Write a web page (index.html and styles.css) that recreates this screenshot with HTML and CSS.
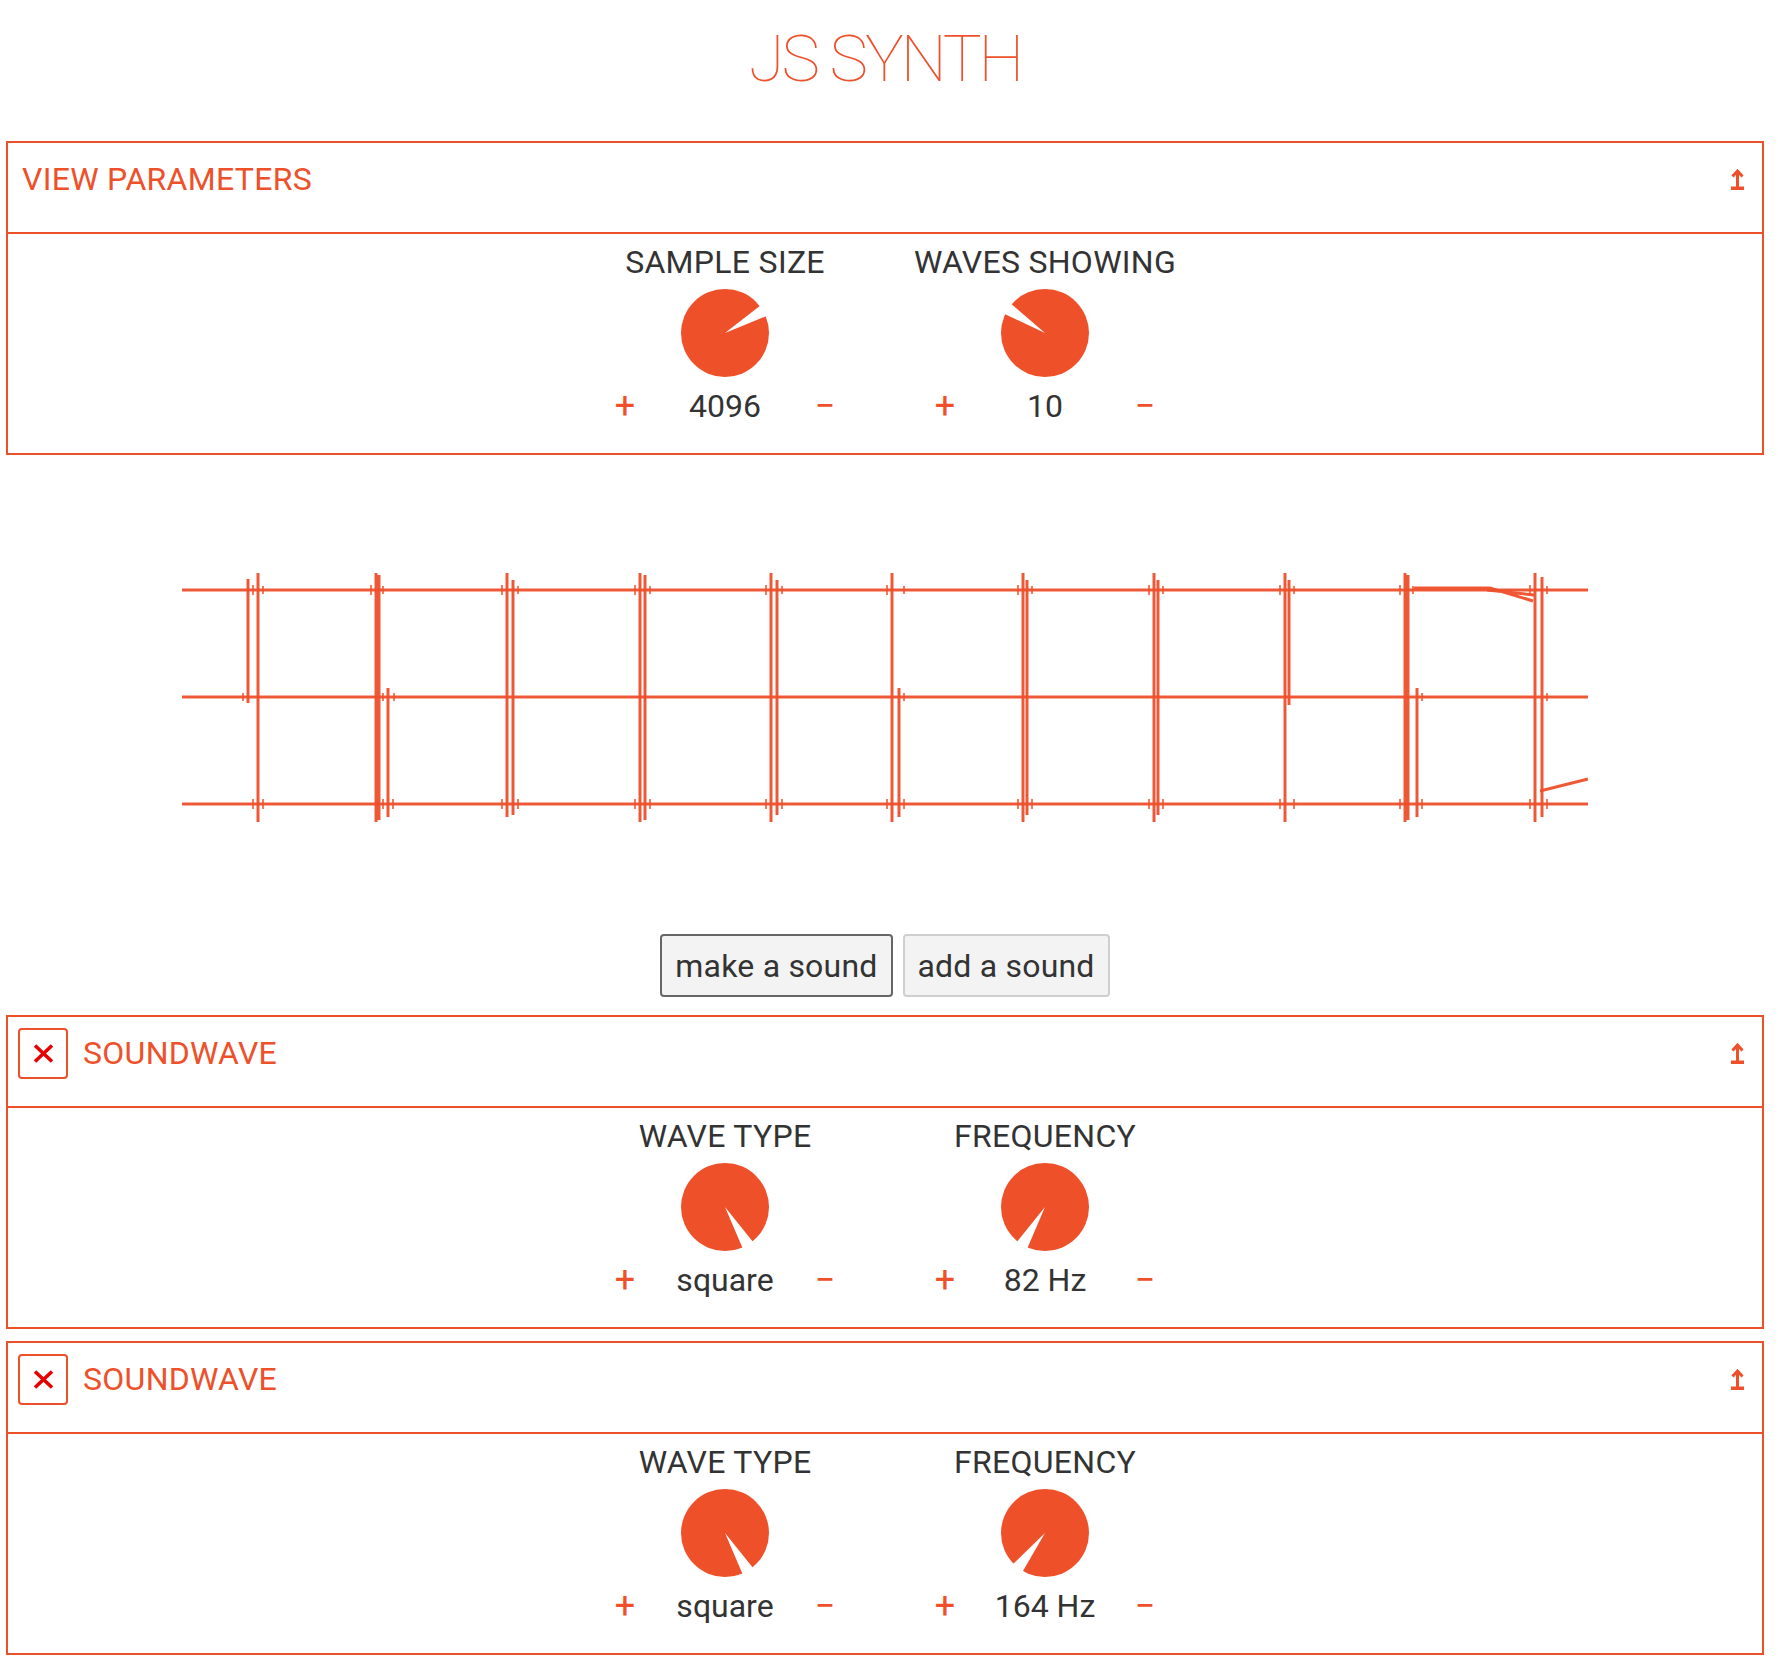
FILE: index.html
```html
<!DOCTYPE html>
<html lang="en">
<head>
<meta charset="utf-8">
<title>JS Synth</title>
<link rel="stylesheet" href="styles.css">
</head>
<body>
<div class="app">
  <h1 class="title">JS SYNTH</h1>

  <section class="panel">
    <header class="panel-head">
      <span class="panel-title view-title">VIEW PARAMETERS</span>
      <svg class="collapse" width="13" height="21" viewBox="0 0 13 21"><path d="M1.5 7.5 L6.5 2 L11.5 7.5" fill="none" stroke="#ee502a" stroke-width="3"/><path d="M6.5 3 V18" stroke="#ee502a" stroke-width="3"/><rect x="0" y="17.5" width="13" height="3.5" fill="#ee502a"/></svg>
    </header>
    <div class="panel-body">
      <div class="control">
        <div class="control-label">SAMPLE SIZE</div>
        <svg class="knob" width="88" height="88" viewBox="-44 -44 88 88"><circle r="44" fill="#ee502a"/><polygon points="0,0 -6.3,-46 6.3,-46" fill="#fff" transform="rotate(60)"/></svg>
        <div class="stepper"><span class="step">+</span><span class="value">4096</span><span class="step">−</span></div>
      </div>
      <div class="control">
        <div class="control-label">WAVES SHOWING</div>
        <svg class="knob" width="88" height="88" viewBox="-44 -44 88 88"><circle r="44" fill="#ee502a"/><polygon points="0,0 -6.3,-46 6.3,-46" fill="#fff" transform="rotate(-57)"/></svg>
        <div class="stepper"><span class="step">+</span><span class="value">10</span><span class="step">−</span></div>
      </div>
    </div>
  </section>

  <div class="scope">
    <svg class="scope-svg" width="1406" height="479" viewBox="0 0 1406 479">
      <defs>
        <filter id="soft" x="-5%" y="-5%" width="110%" height="110%"><feGaussianBlur stdDeviation="0.6"/></filter>
      </defs>
      <g fill="none" stroke="#ee502a" stroke-width="3" stroke-opacity="0.95" filter="url(#soft)">
        <path d="M0 135 H1406 M0 242 H1406 M0 349 H1406"/>
        <path d="M1232 133 H1308 L1351 146 M1305 135 L1352 140 M1358 336 L1406 324"/>
        <path d="M66 124 V248 M76 118 V367 M194 118 V367 M197 120 V365 M206 233 V362 M325 118 V362 M331 125 V360 M458 118 V367 M463 120 V365 M589 118 V367 M595 125 V360 M710 118 V367 M717 233 V362 M841 118 V367 M845 125 V360 M972 118 V367 M976 125 V360 M1103 118 V367 M1107 125 V250 M1223 118 V367 M1226 120 V365 M1235 233 V362 M1353 118 V367 M1360 122 V362"/>
      </g>
      <g fill="none" stroke="#ee502a" stroke-width="2" stroke-opacity="0.75" filter="url(#soft)">
        <path d="M71 130 V140 M81 131 V139 M189 130 V140 M201 131 V139 M320 130 V140 M336 131 V139 M453 130 V140 M468 131 V139 M584 130 V140 M600 131 V139 M705 130 V140 M722 131 V139 M836 130 V140 M850 131 V139 M967 130 V140 M981 131 V139 M1098 130 V140 M1112 131 V139 M1218 130 V140 M1231 131 V139 M1348 130 V140 M1365 131 V139"/>
        <path d="M71 344 V354 M81 344 V354 M201 344 V354 M211 344 V354 M320 344 V354 M336 344 V354 M453 344 V354 M468 344 V354 M584 344 V354 M600 344 V354 M705 344 V354 M722 344 V354 M836 344 V354 M850 344 V354 M967 344 V354 M981 344 V354 M1098 344 V354 M1112 344 V354 M1218 344 V354 M1240 344 V354 M1348 344 V354 M1365 344 V354"/>
        <path d="M61 238 V246 M201 238 V246 M212 238 V246 M463 238 V246 M722 238 V246 M1240 238 V246 M1365 238 V246"/>
      </g>
    </svg>
  </div>

  <div class="actions">
    <button class="btn btn-focus">make a sound</button>
    <button class="btn">add a sound</button>
  </div>

  <section class="panel">
    <header class="panel-head">
      <span class="close"><svg width="21" height="19" viewBox="0 0 21 19"><path d="M2 1.5 L19 17.5 M19 1.5 L2 17.5" stroke="#e60000" stroke-width="3.6"/></svg></span>
      <span class="panel-title">SOUNDWAVE</span>
      <svg class="collapse" width="13" height="21" viewBox="0 0 13 21"><path d="M1.5 7.5 L6.5 2 L11.5 7.5" fill="none" stroke="#ee502a" stroke-width="3"/><path d="M6.5 3 V18" stroke="#ee502a" stroke-width="3"/><rect x="0" y="17.5" width="13" height="3.5" fill="#ee502a"/></svg>
    </header>
    <div class="panel-body">
      <div class="control">
        <div class="control-label">WAVE TYPE</div>
        <svg class="knob" width="88" height="88" viewBox="-44 -44 88 88"><circle r="44" fill="#ee502a"/><polygon points="0,0 -6.3,-46 6.3,-46" fill="#fff" transform="rotate(149)"/></svg>
        <div class="stepper"><span class="step">+</span><span class="value">square</span><span class="step">−</span></div>
      </div>
      <div class="control">
        <div class="control-label">FREQUENCY</div>
        <svg class="knob" width="88" height="88" viewBox="-44 -44 88 88"><circle r="44" fill="#ee502a"/><polygon points="0,0 -6.3,-46 6.3,-46" fill="#fff" transform="rotate(-149)"/></svg>
        <div class="stepper"><span class="step">+</span><span class="value">82 Hz</span><span class="step">−</span></div>
      </div>
    </div>
  </section>

  <section class="panel">
    <header class="panel-head">
      <span class="close"><svg width="21" height="19" viewBox="0 0 21 19"><path d="M2 1.5 L19 17.5 M19 1.5 L2 17.5" stroke="#e60000" stroke-width="3.6"/></svg></span>
      <span class="panel-title">SOUNDWAVE</span>
      <svg class="collapse" width="13" height="21" viewBox="0 0 13 21"><path d="M1.5 7.5 L6.5 2 L11.5 7.5" fill="none" stroke="#ee502a" stroke-width="3"/><path d="M6.5 3 V18" stroke="#ee502a" stroke-width="3"/><rect x="0" y="17.5" width="13" height="3.5" fill="#ee502a"/></svg>
    </header>
    <div class="panel-body">
      <div class="control">
        <div class="control-label">WAVE TYPE</div>
        <svg class="knob" width="88" height="88" viewBox="-44 -44 88 88"><circle r="44" fill="#ee502a"/><polygon points="0,0 -6.3,-46 6.3,-46" fill="#fff" transform="rotate(149)"/></svg>
        <div class="stepper"><span class="step">+</span><span class="value">square</span><span class="step">−</span></div>
      </div>
      <div class="control">
        <div class="control-label">FREQUENCY</div>
        <svg class="knob" width="88" height="88" viewBox="-44 -44 88 88"><circle r="44" fill="#ee502a"/><polygon points="0,0 -6.3,-46 6.3,-46" fill="#fff" transform="rotate(-142)"/></svg>
        <div class="stepper"><span class="step">+</span><span class="value">164 Hz</span><span class="step">−</span></div>
      </div>
    </div>
  </section>
</div>
</body>
</html>
```

FILE: styles.css
```css
* {
  box-sizing: border-box;
}

body {
  margin: 0;
  background: #fff;
  font-family: Roboto, "Liberation Sans", Arial, sans-serif;
  color: #333;
}

.app {
  margin: 0 14px 0 6px;
  padding-bottom: 24px;
}

.title {
  margin: 21px 0 43px;
  text-align: center;
  font-weight: 100;
  font-size: 65px;
  line-height: 77px;
  letter-spacing: -3px;
  color: #ee502a;
}

.panel {
  border: 2px solid #ee502a;
}

.panel + .panel {
  margin-top: 12px;
}

.panel-head {
  display: flex;
  align-items: center;
  height: 91px;
  padding: 11px 18px 27px 10px;
  border-bottom: 2px solid #ee502a;
}

.panel-title {
  flex: 1;
  font-size: 32px;
  line-height: 37px;
  letter-spacing: 0.3px;
  color: #ee502a;
}

.view-title {
  padding-left: 4px;
}

.close {
  display: flex;
  align-items: center;
  justify-content: center;
  width: 50px;
  height: 51px;
  margin-right: 15px;
  border: 2px solid #ee502a;
  border-radius: 4px;
}

.collapse {
  display: block;
  flex: none;
}

.panel-body {
  display: flex;
  justify-content: center;
  padding: 10px 0 28px;
}

.control {
  width: 320px;
  display: flex;
  flex-direction: column;
  align-items: center;
}

.control-label {
  font-size: 32px;
  line-height: 37px;
  letter-spacing: 0.3px;
  color: #333;
}

.knob {
  display: block;
  margin: 8px 0 11px;
}

.stepper {
  display: grid;
  grid-template-columns: 40px 160px 40px;
  align-items: center;
  font-size: 32px;
  line-height: 37px;
  text-align: center;
}

.step {
  color: #ee502a;
  font-size: 36px;
}

.value {
  color: #333;
}

.scope {
  display: flex;
  justify-content: center;
}

.scope-svg {
  display: block;
}

.actions {
  display: flex;
  justify-content: center;
  gap: 10px;
  margin-bottom: 18px;
}

.btn {
  height: 63px;
  padding: 0 13px;
  font-family: Roboto, "Liberation Sans", Arial, sans-serif;
  font-size: 32px;
  letter-spacing: 0.2px;
  color: #333;
  background: #f3f3f3;
  border: 2px solid #cfcfcf;
  border-radius: 4px;
}

.btn-focus {
  border-color: #666;
}
```
